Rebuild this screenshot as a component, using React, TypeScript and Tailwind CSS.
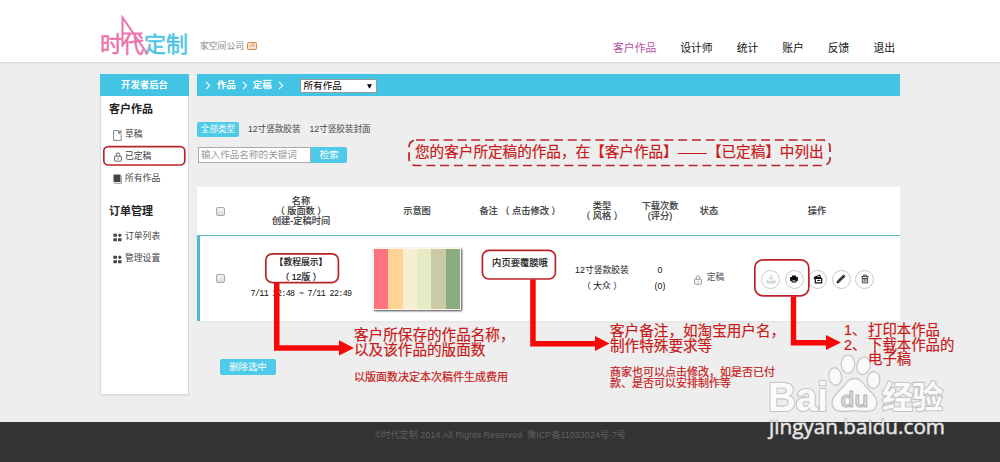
import type { ReactNode } from "react";
import { clsx } from "clsx";

const NAV = ["客户作品", "设计师", "统计", "账户", "反馈", "退出"];

const SWATCHES = ["#fd737f", "#fdd494", "#f7efd2", "#e6ecc6", "#cacaa6", "#8aac80"];

const GRID = "grid grid-cols-[40px_122px_110px_96px_68px_48px_50px_166px] items-center border-l-[3px]";

function LockIcon({ className }: { className?: string }) {
  return (
    <svg viewBox="0 0 8 10" className={clsx("h-[10px] w-2", className)} fill="none" stroke="currentColor" strokeWidth="0.9">
      <path d="M2.2 4.2V2.6a1.8 1.8 0 0 1 3.6 0v1.6" />
      <rect x="0.6" y="4.2" width="6.8" height="5" rx="0.8" />
      <path d="M4 5.8v1.8" />
    </svg>
  );
}

function DraftIcon() {
  return (
    <svg viewBox="0 0 9 11" className="h-[11px] w-[9px]" fill="none" stroke="#777" strokeWidth="0.9">
      <path d="M5.5.6H.6v9.8h7.6V4.4" />
      <path d="M5.4.6v3h2.8zM6.4.8h2v2" fill="#777" strokeWidth="0.4" />
    </svg>
  );
}

function BookIcon() {
  return (
    <svg viewBox="0 0 9 10" className="h-[10px] w-[9px]">
      <path d="M.5.5h7v7.6h-7z" fill="#444" />
      <path d="M8.4 1.5v7.9H1.2" fill="none" stroke="#888" strokeWidth="0.8" />
    </svg>
  );
}

function BlocksIcon() {
  return (
    <svg viewBox="0 0 9 9" className="h-[9px] w-[9px]" fill="#444">
      <path d="M.4.8h3.5v3H.4zM.4 5.2h3.5v3H.4zM5 5.2h3.5v3H5zM6.8.2l2 2-2 2-2-2z" />
    </svg>
  );
}

function Logo() {
  return (
    <div className="relative h-[42px] w-[88px]">
      <p className="absolute bottom-[-1px] left-0 text-[22px] leading-6 whitespace-nowrap [-webkit-text-stroke:0.5px]">
        <span className="text-[#ea74ab]">时代</span>
        <span className="text-[#4ec3e4]">定制</span>
      </p>
      <svg viewBox="0 0 88 42" className="absolute inset-0 h-full w-full" fill="none" stroke="#ea74ab" strokeWidth="2">
        <path d="M22.5 33V3.500L47.500 40" />
        <path d="M22.5 19.500h20" />
      </svg>
    </div>
  );
}

function SideItem({ icon, children }: { icon: ReactNode; children: ReactNode }) {
  return (
    <li className="flex h-[22px] items-center gap-[3px] pl-3 text-[8.8px] text-[#444]">
      <span className="flex w-[9px] justify-center">{icon}</span>
      {children}
    </li>
  );
}

function Sidebar() {
  return (
    <aside className="h-[321px] w-[89px] border border-t-0 border-[#d8d8d8] bg-white shadow-xs">
      <h2 className="-mx-px h-[22px] bg-[#43c4e5] text-center text-[9.4px] leading-[22px] font-bold text-white">开发者后台</h2>
      <h3 className="mt-[3px] pl-2 text-[11px] leading-5 font-bold text-[#222]">客户作品</h3>
      <ul className="mt-[5px]">
        <SideItem icon={<DraftIcon />}>草稿</SideItem>
        <SideItem icon={<LockIcon className="text-[#555]" />}>已定稿</SideItem>
        <SideItem icon={<BookIcon />}>所有作品</SideItem>
      </ul>
      <h3 className="mt-[11px] pl-2 text-[11px] leading-5 font-bold text-[#222]">订单管理</h3>
      <ul className="mt-[5px]">
        <SideItem icon={<BlocksIcon />}>订单列表</SideItem>
        <SideItem icon={<BlocksIcon />}>管理设置</SideItem>
      </ul>
    </aside>
  );
}

function Chevron() {
  return (
    <svg viewBox="0 0 6 9" className="h-[9px] w-[6px]" fill="none" stroke="#fff" strokeWidth="1.1">
      <path d="M1 .8 4.6 4.5 1 8.2" />
    </svg>
  );
}

function Checkbox() {
  return <span className="mx-auto block h-[9px] w-[9px] rounded-[2px] border border-[#a8a8a8] bg-linear-to-b from-[#f4f4f4] to-[#dcdcdc]" />;
}

function ActionButton({ children, muted }: { children: ReactNode; muted?: boolean }) {
  return (
    <span
      className={clsx(
        "flex h-[19px] w-[19px] items-center justify-center rounded-full border border-[#c9c9c9] bg-white",
        muted ? "text-[#c4c4c4]" : "text-[#111]",
      )}
    >
      <svg viewBox="0 0 10 10" className="h-[10px] w-[10px]" fill="none" stroke="currentColor" strokeWidth="1">
        {children}
      </svg>
    </span>
  );
}

function Works() {
  return (
    <section className="mt-6 h-[134px] bg-white text-center whitespace-nowrap shadow-xs">
      <div className={clsx(GRID, "h-[48px] border-transparent text-[9.2px] leading-[10px] text-[#333] [-webkit-text-stroke:0.2px]")}>
        <Checkbox />
        <div>
          名称
          <br />（ 版面数 ）
          <br />
          创建-定稿时间
        </div>
        <div>示意图</div>
        <div>备注 （ 点击修改 ）</div>
        <div>
          类型
          <br />（ 风格 ）
        </div>
        <div>
          下载次数
          <br />
          (评分)
        </div>
        <div>状态</div>
        <div>操作</div>
      </div>
      <div className="h-px bg-[#63b9cb]" />
      <div className={clsx(GRID, "h-[85px] border-[#4fb9d3] text-[8.8px] leading-[15.5px] text-[#111]")}>
        <Checkbox />
        <div>
          <span className="[-webkit-text-stroke:0.2px]">
            【教程展示】
            <br />（ 12版 ）
          </span>
          <br />
          <span className="font-['Liberation_Mono'] text-[8.4px] tracking-[-0.64px]">7/11 22:48 ~ 7/11 22:49</span>
        </div>
        <div className="mx-auto flex h-[62px] w-[88px] border border-[#fff5e8] shadow-[1px_1px_2px_#444]">
          {SWATCHES.map((color) => (
            <span key={color} className="flex-1" style={{ backgroundColor: color }} />
          ))}
        </div>
        <div className="pb-[30px] text-[9.3px] [-webkit-text-stroke:0.2px]">内页要覆膜哦</div>
        <div>
          12寸竖款胶装
          <br />（ 大众 ）
        </div>
        <div>
          0
          <br />
          (0)
        </div>
        <div className="flex items-center justify-center gap-[5px] text-[#555]">
          <LockIcon className="mt-[2px] text-[#888]" />
          <span className="-mt-[2px]">定稿</span>
        </div>
        <div className="flex justify-center gap-[4.5px] pt-px pl-px">
          <ActionButton muted>
            <path d="M5 1v4M3 3.5l2 2 2-2M2 5.5 1 7v2h8V7L8 5.5M1 7.3h8" />
          </ActionButton>
          <ActionButton>
            <path d="M3 1.600h4v1.400h1.900v4H7.400v1.500H2.600V7H1.100V3H3z" fill="currentColor" stroke="none" />
            <path d="M3.400 6.900h3.200" stroke="#fff" strokeWidth="0.9" />
          </ActionButton>
          <ActionButton>
            <path d="M1 3.5 6.5 1.2l1 1.8M2.3 4.5h6.4v4.3H2.3zM1 5l1.2-1.5h6" strokeWidth="1.2" />
            <path d="M4 6.4h3.3" />
          </ActionButton>
          <ActionButton>
            <path d="M1 9l.7-2.3L7.6.9l1.5 1.5-5.9 5.8z" />
            <path d="M2.2 7.5 8 2" strokeWidth="1.1" />
          </ActionButton>
          <ActionButton>
            <path d="M1.5 2.6h7M3.6 2.4V1.1h2.8v1.3M2.3 2.8v6.1h5.4V2.8M4.1 4v3.8M5.9 4v3.8" stroke="#333" strokeWidth="0.9" />
            <path d="M2.3 4.5h5.4" stroke="#333" strokeWidth="0.8" />
          </ActionButton>
        </div>
      </div>
    </section>
  );
}

/** Red boxes and arrows over the page. */
function Markers() {
  return (
    <svg viewBox="0 0 1000 462" className="absolute inset-0 h-full w-full" fill="none" stroke="#b9242a" strokeWidth="1.7">
      <rect x="409" y="140" width="421" height="25.5" rx="7" strokeDasharray="9 4.8" />
      <rect x="103.8" y="146.6" width="81" height="18.4" rx="4.5" />
      <rect x="265.8" y="253.8" width="72.6" height="28.8" rx="6.5" />
      <rect x="482.4" y="250.4" width="73" height="28.6" rx="6.5" />
      <rect x="754.8" y="259.8" width="54" height="36" rx="8" />
      <g fill="#f90606" stroke="none">
        <path d="M274 283h5.5v62.3H339v-5l15 7.7-15 7.5v-4.8h-65z" />
        <path d="M530.2 279.5h5.5v61.6H595v-5l14.5 7.5L595 351v-4.5h-64.8z" />
        <path d="M790.8 296.5h5.4v43.6H826v-5l15 7.5-15 7.5v-4.5h-35.2z" />
      </g>
    </svg>
  );
}

function Watermark() {
  return (
    <svg viewBox="0 0 190 92" className="absolute top-[350px] left-[760px] h-[92px] w-[190px]" fontFamily="'Open Sans', 'Noto Sans CJK SC', sans-serif">
      <g fill="#fafafa" stroke="#c8c8c8" strokeWidth="1.3">
        <ellipse cx="75.2" cy="26.500" rx="6.3" ry="8.800" transform="rotate(-10 75.2 26.5)" />
        <ellipse cx="88" cy="14.200" rx="6.700" ry="9.200" />
        <ellipse cx="103.500" cy="15.800" rx="6.500" ry="9" transform="rotate(14 103.5 15.8)" />
        <ellipse cx="113.5" cy="30" rx="6.3" ry="8.5" transform="rotate(5 113.5 30)" />
        <path d="M94.500 28.500c7 0 9.500 6.500 14 11 5 5 9 8.500 8.500 14-.5 6-5 8-11 8-4 0-7-.8-11.500-.8s-7.500.8-11.500.8c-7 0-11-3-11-9 0-5.500 4-8 8.500-13 4.500-4.500 7-11 14-11z" />
      </g>
      <g fill="#fafafa" stroke="#c4c4c4" strokeWidth="2.200" paintOrder="stroke" fontWeight="700">
        <text x="8" y="60.500" fontSize="41" fontFamily="'Liberation Sans', sans-serif" textLength="60" lengthAdjust="spacingAndGlyphs">Bai</text>
        <text x="122" y="58" fontSize="31" textLength="61">经验</text>
      </g>
      <text x="80.500" y="56.500" fontSize="21" fontWeight="600" fill="#e6e6e6" stroke="#b8b8b8" strokeWidth="1.200" textLength="28" lengthAdjust="spacingAndGlyphs">
        du
      </text>
      <text x="9" y="84" fontSize="19.500" fontWeight="500" fill="#e8e8e8" stroke="#a5a5a5" strokeWidth="0.8" paintOrder="stroke" textLength="176" lengthAdjust="spacingAndGlyphs">
        jingyan.baidu.com
      </text>
    </svg>
  );
}

function Notes() {
  return (
    <div className="text-[14.6px] leading-[14.6px] whitespace-nowrap text-[#c81a1a] [-webkit-text-stroke:0.2px]">
      <p className="absolute top-[145px] left-[415px]">您的客户所定稿的作品，在【客户作品】——【已定稿】中列出</p>
      <div className="absolute top-[328px] left-[354px]">
        <p>客户所保存的作品名称，</p>
        <p>以及该作品的版面数</p>
        <p className="mt-[15px] text-[11px] leading-[11px]">以版面数决定本次稿件生成费用</p>
      </div>
      <div className="absolute top-[324px] left-[610px]">
        <p>客户备注，如淘宝用户名，</p>
        <p>制作特殊要求等</p>
        <p className="mt-[14px] text-[11px] leading-[11px]">
          商家也可以点击修改，如是否已付
          <br />
          款、是否可以安排制作等
        </p>
      </div>
      <div className="absolute top-[323px] left-[844px] grid grid-cols-[24px_auto] text-[14.4px]">
        <span>1、</span>
        <span>打印本作品</span>
        <span>2、</span>
        <span>下载本作品的</span>
        <span className="col-start-2">电子稿</span>
      </div>
    </div>
  );
}

export default function App() {
  return (
    <div className="relative flex h-[462px] w-[1000px] flex-col overflow-hidden bg-[#eeeeee] font-['Liberation_Sans','Noto_Sans_CJK_SC',sans-serif]">
      <header className="flex h-[63px] items-start border-b border-[#dcdcdc] bg-white pr-[105px] pl-[100px] shadow-xs">
        <div className="pt-[14px]">
          <Logo />
        </div>
        <div className="flex items-center gap-[3px] pt-[39px] pl-[12px] text-[8.8px] leading-[14px] text-[#888]">
          家空间公司
          <svg viewBox="0 0 10 8" className="h-2 w-[10px]" fill="none" stroke="#dc8a45">
            <rect x="0.6" y="0.6" width="8.8" height="6.8" rx="1.5" strokeWidth="1.2" />
            <path d="M3 2.5v3M5 5.5v-3h2v3" />
          </svg>
        </div>
        <nav className="ml-auto flex gap-6 pt-[40px] text-[10.8px] leading-4 text-[#111]">
          {NAV.map((item, i) => (
            <a key={item} className={i === 0 ? "text-[#b850a0]" : undefined}>
              {item}
            </a>
          ))}
        </nav>
      </header>

      <main className="flex h-[359px] gap-2 pt-[11px] pl-[100px]">
        <Sidebar />
        <div className="w-[703px]">
          <div className="flex h-[22px] items-center bg-[#43c4e5] pl-2 text-[9.4px] font-bold text-white">
            <Chevron />
            <span className="ml-[6px]">作品</span>
            <span className="ml-[6px]">
              <Chevron />
            </span>
            <span className="ml-[5px]">定稿</span>
            <span className="ml-[6px]">
              <Chevron />
            </span>
            <div className="mt-[2px] ml-[16px] flex h-[14px] w-[77px] items-center justify-between border border-[#999] bg-white pr-1 pl-[3px] text-[9.6px] font-normal text-black">
              所有作品
              <svg viewBox="0 0 5 5" className="h-[5px] w-[5px]">
                <path d="M0 .3h5L2.500 4.800z" />
              </svg>
            </div>
          </div>

          <div className="mt-[26px] flex h-[15px] items-center text-[8.6px] text-[#444]">
            <span className="h-[15px] w-[42px] rounded-[2px] bg-[#4fcae8] text-center leading-[15px] text-white">全部类型</span>
            <span className="ml-[9px]">12寸竖款胶装</span>
            <span className="ml-[9px]">12寸竖胶装封面</span>
          </div>

          <div className="mt-[10px] flex h-4 pl-px">
            <div className="w-[113px] border border-[#aaa] bg-white pl-[2px] text-[9.6px] leading-[14px] text-[#999]">输入作品名称的关键词</div>
            <div className="w-[36px] rounded-r-[2px] bg-[#4fcae8] text-center text-[9.6px] leading-4 text-white">检索</div>
          </div>

          <Works />

          <button className="mt-[38px] block h-4 w-[56px] translate-x-[23px] rounded-[2px] bg-[#4fcae8] text-center text-[9.4px] leading-4 text-white">删除选中</button>
        </div>
      </main>

      <footer className="h-10 bg-[#333] pt-[6px] pl-px text-center text-[9px] leading-[14px] tracking-[0.02px] whitespace-pre text-[#606060]">
        ©时代定制 2014 All Rights Reserved{"  "}豫ICP备11033024号-7号
      </footer>

      <Markers />
      <Watermark />
      <Notes />
    </div>
  );
}
